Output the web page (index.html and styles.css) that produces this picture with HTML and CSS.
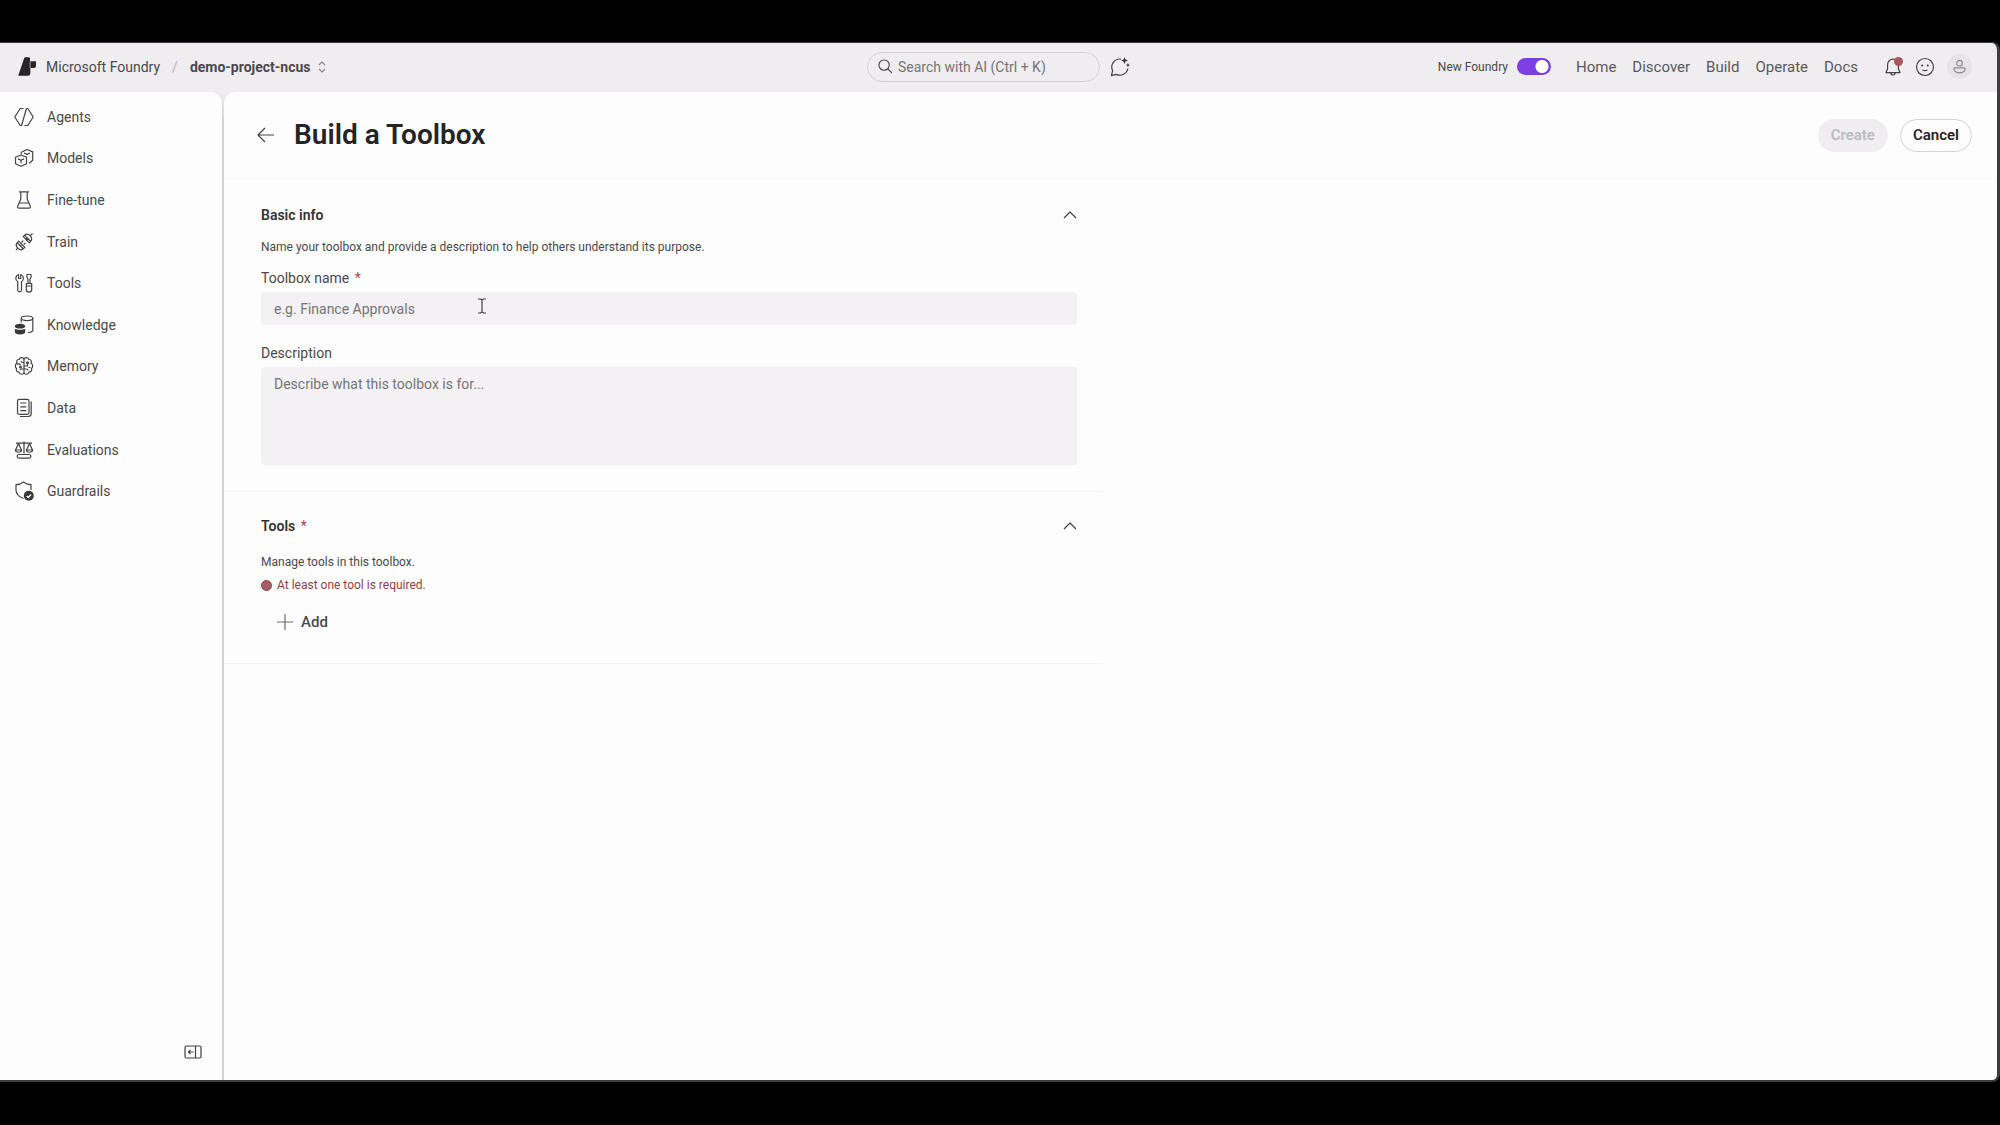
FILE: index.html
```html
<!DOCTYPE html>
<html lang="en">
<head>
<meta charset="utf-8">
<title>Build a Toolbox - Microsoft Foundry</title>
<meta name="viewport" content="width=device-width, initial-scale=1">
<link rel="stylesheet" href="styles.css">
</head>
<body>
<div class="window">
  <header class="topbar">
    <div class="crumbs">
      <a class="brand" href="#">
        <svg class="logo" viewBox="0 0 18 19" aria-hidden="true"><path d="M6.200 1 Q6.600 .3 7.500 .3 H10.800 Q12 .5 12 1.800 V4.400 L13.200 4.200 H18 V9 Q18 10.900 16.200 11 H12.400 V16.500 Q12.300 18.700 10 18.700 H.2 Z"/><path class="logo-cut" d="M12.100 4.500V11"/></svg>
        <span>Microsoft Foundry</span>
      </a>
      <span class="slash">/</span>
      <button class="project" type="button">
        <span>demo-project-ncus</span>
        <svg class="updown" viewBox="0 0 8 12" aria-hidden="true"><path d="M1 4 4 1l3 3M1 8l3 3 3-3"/></svg>
      </button>
    </div>
    <div class="search-area">
      <label class="search">
        <svg class="icon-search" viewBox="0 0 16 16" aria-hidden="true"><circle cx="6.500" cy="6.500" r="5.500"/><path d="m10.500 10.500 4.500 4.500"/></svg>
        <input type="text" aria-label="Search with AI" placeholder="Search with AI (Ctrl + K)">
      </label>
      <button class="icon-button" type="button" aria-label="Open chat">
        <svg class="icon-chat" viewBox="0 0 20 20" aria-hidden="true"><path d="M11 2.100A8.200 8.200 0 0 0 2.600 13.800L1.400 18.600l4.900-1.200A8.200 8.200 0 0 0 17.900 11.500"/><path class="solid" d="M14.500 0l1 2.500 2.500 1-2.500 1-1 2.500-1-2.500-2.500-1 2.500-1zM17.900 6l.7 1.500 1.400.6-1.400.6-.7 1.500-.6-1.500-1.500-.6 1.500-.6z"/></svg>
      </button>
    </div>
    <div class="right-tools">
      <label class="toggle">
        <span>New Foundry</span>
        <input type="checkbox" role="switch" checked>
      </label>
      <nav class="links" aria-label="Primary">
        <a href="#">Home</a><a href="#">Discover</a><a href="#">Build</a><a href="#">Operate</a><a href="#">Docs</a>
      </nav>
      <div class="actions">
        <button class="icon-button bell" type="button" aria-label="Notifications">
          <svg viewBox="0 0 20 20" aria-hidden="true"><path d="M10 2.200a5.400 5.400 0 0 0-5.400 5.400v4.200L3 15.600h14l-1.600-3.800V7.600A5.400 5.400 0 0 0 10 2.200zM7.800 15.800a2.200 2.200 0 0 0 4.400 0"/></svg>
          <span class="badge"></span>
        </button>
        <button class="icon-button" type="button" aria-label="Feedback">
          <svg viewBox="0 0 20 20" aria-hidden="true"><circle cx="10" cy="10" r="8.500"/><circle class="solid" cx="7.200" cy="8.400" r="1"/><circle class="solid" cx="12.800" cy="8.400" r="1"/><path d="M7.500 13q2.500 1.300 5 0"/></svg>
        </button>
        <button class="avatar" type="button" aria-label="Account">
          <svg viewBox="0 0 16 16" aria-hidden="true"><circle cx="8" cy="4.500" r="3"/><path d="M3 9.500h10c1 0 1.200 1 .8 2-.8 2.300-3 3.300-5.800 3.300s-5-1-5.800-3.300c-.4-1-.2-2 .8-2z"/></svg>
        </button>
      </div>
    </div>
  </header>

  <div class="body">
    <aside class="sidebar">
      <nav class="menu" aria-label="Project">
        <a href="#"><svg viewBox="0 0 20 20" aria-hidden="true"><path d="M9.500 1.500H6.200L.8 10l5.400 8.500h1.300L12.500 1.500h1.300L19.200 10l-5.400 8.500h-3.300"/></svg><span>Agents</span></a>
        <a href="#"><svg viewBox="0 0 20 20" aria-hidden="true"><path d="M1.500 9.300 7 7l5.500 2.300v6.400L7 18.300l-5.500-2.600zM4 10.900l3 1.300 3-1.300M7 12.200v3M7.300 4.300 13 1.500l5.700 2.400v8.300l-3.500 3M10 5l3 1.400 3-1.400"/><path d="M7.300 4.300v2"/></svg><span>Models</span></a>
        <a href="#"><svg viewBox="0 0 20 20" aria-hidden="true"><path d="M5 1.800h10M6.800 2v7L3.700 16.200a1.300 1.300 0 0 0 1.200 1.900h10.200a1.300 1.300 0 0 0 1.200-1.900L13.200 9V2M5.400 13h9.200"/></svg><span>Fine-tune</span></a>
        <a href="#"><svg viewBox="0 0 20 20" aria-hidden="true"><path d="m2 18 1.800-1.800M16.200 3.800 18.500 1.500M3 10.500l6.500 6.500M10.500 3.200l6.300 6.300M3.200 10.700c-1 1.200-1.300 3.600.6 5.500s4.300 1.600 5.500.6l1.500-1.500-6.100-6.100zM16.600 9.300c1-1.200 1.500-3.600-.4-5.500s-4.300-1.600-5.500-.6L9.200 4.700l6.100 6.100zM7.500 10.500 9.300 8.700M9.800 12.700l1.700-1.800M6 13l1.500 1.500M12 6l2 2"/></svg><span>Train</span></a>
        <a href="#"><svg viewBox="0 0 20 20" aria-hidden="true"><path d="M4.500 1.500a4 4 0 0 0-.8 7.200V17a1.900 1.900 0 0 0 3.800 0V8.700a4 4 0 0 0-.8-7.200V5.500H4.500zM13 1.500h4v3l-1 1.500v4.500h-2V6l-1-1.500zM12.300 10.500h5.400v6a2.700 2.700 0 0 1-5.400 0zM12.300 13h5.400"/></svg><span>Tools</span></a>
        <a href="#"><svg viewBox="0 0 20 20" aria-hidden="true"><ellipse cx="13" cy="3.300" rx="5.800" ry="2.300"/><path d="M7.200 3.500v4M18.800 3.500v11.800c0 1.200-2 2-4.800 2.200"/><path class="solid" d="M.8 11.200c0-1.500 2.300-2.500 5.200-2.500s5.200 1 5.200 2.500-2.300 2.300-5.200 2.300-5.200-.8-5.200-2.300zM.8 13.700c2.500 1.500 7.900 1.500 10.400 0v3.400c0 1.500-2.300 2.500-5.200 2.500S.8 18.600.8 17.100z"/></svg><span>Knowledge</span></a>
        <a href="#"><svg viewBox="0 0 20 20" aria-hidden="true"><path d="M10 3.500C9.700 1.200 6 .9 5.400 3.300 3.200 3 2 5.600 3 7.200c-2 .6-2.300 4-.5 5.200-.8 2.200.9 3.900 2.500 3.800.5 2.600 4.600 2.800 5 .3zM10 3.500c.3-2.300 4-2.600 4.600-.2 2.200-.3 3.400 2.300 2.400 3.900 2 .6 2.300 4 .5 5.200.8 2.200-.9 3.900-2.500 3.800-.5 2.600-4.600 2.800-5 .3M10 6.500H8.500A1.500 1.500 0 0 1 7 5M10 13H8a2 2 0 0 0-2 1M3 8.500c1-1 3-.8 3.500.7M10 10h3.500V8M10 13h2.500q1.500 0 1.500 1.500M16.500 11.500h-2"/><circle cx="6.500" cy="11" r=".9"/><circle cx="13.500" cy="6.800" r="1"/></svg><span>Memory</span></a>
        <a href="#"><svg viewBox="0 0 20 20" aria-hidden="true"><rect x="3.500" y="1.300" width="11.500" height="15" rx="1.800"/><path d="M6.300 5h6M6.300 8.800h6M6.300 12.600h6M17.200 3.500v12a3 3 0 0 1-3 3H6"/></svg><span>Data</span></a>
        <a href="#"><svg viewBox="0 0 20 20" aria-hidden="true"><path d="M2 3.200h16M10 1.500v12M4.500 3.500 1.500 10h6zM15.500 3.500l-3 6.500h6zM1.300 10c.3 3 6.100 3 6.400 0M12.300 10c.3 3 6.100 3 6.400 0M5 14.500h10a1.700 1.700 0 0 1 0 3.700H5a1.700 1.700 0 0 1 0-3.700z"/></svg><span>Evaluations</span></a>
        <a href="#"><svg viewBox="0 0 20 20" aria-hidden="true"><path d="M9.500 17.500C4.500 15.500 2 12.500 2 9V3.700C4.500 3.700 7 3 9.500 1 12 3 14.500 3.700 17 3.700V9"/><circle class="solid" cx="14.800" cy="14.800" r="5"/><path class="tick" d="m12.700 15 1.500 1.500 2.900-3"/></svg><span>Guardrails</span></a>
      </nav>
      <button class="icon-button collapse" type="button" aria-label="Collapse navigation">
        <svg viewBox="0 0 18 14" aria-hidden="true"><rect x="1" y="1" width="16" height="12" rx="1.500"/><path d="M11.500 1v12M9.500 7H4.500M6.500 5l-2 2 2 2"/></svg>
      </button>
    </aside>

    <main class="content">
      <div class="page-head">
        <button class="icon-button back" type="button" aria-label="Back">
          <svg viewBox="0 0 18 16" aria-hidden="true"><path d="M17 8H1M8 1 1 8l7 7"/></svg>
        </button>
        <h1>Build a Toolbox</h1>
        <button class="pill" type="button" disabled>Create</button>
        <button class="pill outline" type="button">Cancel</button>
      </div>
      <form class="form">
        <section class="section">
          <div class="section-head">
            <h2>Basic info</h2>
            <button class="icon-button" type="button" aria-label="Collapse Basic info"><svg class="chevron" viewBox="0 0 14 8" aria-hidden="true"><path d="m1 7 6-6 6 6"/></svg></button>
          </div>
          <p class="hint">Name your toolbox and provide a description to help others understand its purpose.</p>
          <div class="field">
            <label for="name">Toolbox name <span class="required">*</span></label>
            <div class="name-box">
              <input id="name" type="text" placeholder="e.g. Finance Approvals">
              <svg class="cursor" viewBox="0 0 10 16" aria-hidden="true"><path d="M1 1h2.500L5 2l1.500-1H9M5 2v12M1 15h2.500L5 14l1.500 1H9"/></svg>
            </div>
          </div>
          <div class="field">
            <label for="description">Description</label>
            <textarea id="description" placeholder="Describe what this toolbox is for..."></textarea>
          </div>
        </section>
        <section class="section tools">
          <div class="section-head">
            <h2>Tools <span class="required">*</span></h2>
            <button class="icon-button" type="button" aria-label="Collapse Tools"><svg class="chevron" viewBox="0 0 14 8" aria-hidden="true"><path d="m1 7 6-6 6 6"/></svg></button>
          </div>
          <p class="hint">Manage tools in this toolbox.</p>
          <p class="hint error"><span class="dot"></span>At least one tool is required.</p>
          <button class="add" type="button">
            <svg viewBox="0 0 16 16" aria-hidden="true"><path d="M8 0v16M0 8h16"/></svg>
            <span>Add</span>
          </button>
        </section>
      </form>
    </main>
  </div>
</div>
</body>
</html>
```

FILE: styles.css
```css
* {
  box-sizing: border-box;
}

body {
  margin: 0;
  min-height: 100vh;
  padding: 42px 0 43px;
  display: flex;
  background: #000;
  color: #4a494c;
  font: 14px/20px Roboto, "Liberation Sans", sans-serif;
}

h1,
h2,
p {
  margin: 0;
}

a {
  color: inherit;
  text-decoration: none;
}

button,
input,
textarea {
  font: inherit;
  color: inherit;
  border: 0;
  padding: 0;
  background: none;
}

input::placeholder,
textarea::placeholder {
  color: #757575;
  opacity: 1;
}

svg {
  display: block;
  flex: none;
  fill: none;
  stroke: #424242;
  stroke-width: 1.2;
  stroke-linejoin: round;
  overflow: visible;
}

svg .solid {
  fill: #38373a;
  stroke: none;
}

.window {
  flex: 1;
  display: flex;
  flex-direction: column;
  min-width: 0;
  background: #efedf0;
  border: solid #3c3c3e;
  border-width: 1px 3px 2px 0;
  border-radius: 0 8px 8px 0;
  overflow: hidden;
}

/* Top bar */

.topbar {
  display: grid;
  grid-template-columns: 1fr auto 1fr;
  align-items: center;
  height: 49px;
  padding: 0 18px 2px;
}

.crumbs,
.brand,
.project,
.search-area,
.search,
.right-tools,
.toggle,
.links,
.actions {
  display: flex;
  align-items: center;
}

.brand {
  gap: 10px;
}

.logo {
  width: 18px;
  height: 19px;
  fill: #262528;
  stroke: none;
}

.logo .logo-cut {
  stroke: #8a898c;
}

.slash {
  margin: 0 12px;
  color: #b4b2b6;
}

.project {
  gap: 8px;
  font-weight: 700;
}

.updown {
  width: 8px;
  height: 12px;
  stroke: #8a898c;
}

.search-area {
  gap: 10px;
}

.search {
  width: 233px;
  height: 30px;
  padding: 0 10px;
  gap: 5px;
  border: 1px solid #d3d1d5;
  border-radius: 15px;
}

.search input {
  flex: 1;
  min-width: 0;
}

.icon-search {
  width: 15px;
  height: 15px;
}

.icon-button {
  position: relative;
  flex: none;
}

.icon-button svg {
  width: 20px;
  height: 20px;
}

.right-tools {
  justify-content: flex-end;
  gap: 25px;
  padding-right: 7px;
}

.toggle {
  gap: 9px;
  font-size: 12px;
}

.toggle input {
  appearance: none;
  width: 34px;
  height: 17px;
  margin: 0;
  border-radius: 9px;
  background: radial-gradient(circle at 25px 50%, #fff 6px, #7c3fe4 7px);
}

.links {
  gap: 16px;
  color: #5a595c;
  font-size: 15px;
}

.actions {
  gap: 12px;
}

.badge {
  position: absolute;
  top: 0;
  right: 0;
  width: 9px;
  height: 9px;
  border-radius: 50%;
  background: #a85560;
}

.avatar {
  display: grid;
  place-items: center;
  width: 25px;
  height: 25px;
  border-radius: 50%;
  background: #e5e3e6;
}

.avatar svg {
  width: 15px;
  height: 15px;
  stroke: #8a898c;
}

/* Panels */

.body {
  flex: 1;
  display: flex;
  gap: 2px;
  background: linear-gradient(#efedf0, #d2d1d4 30px);
}

.sidebar,
.content {
  background: #fefdfe;
}

.sidebar {
  width: 222px;
  flex: none;
  display: flex;
  flex-direction: column;
  justify-content: space-between;
  padding: 4px 20px 21px 14px;
  border-radius: 0 12px 0 0;
}

.menu {
  display: grid;
  grid-auto-rows: 1fr;
  height: 416px;
}

.menu a {
  display: flex;
  align-items: center;
  gap: 13px;
}

.menu svg {
  width: 20px;
  height: 20px;
}

.menu .tick {
  stroke: #fff;
}

.collapse {
  align-self: flex-end;
}

.collapse svg {
  width: 18px;
  height: 14px;
}

.content {
  flex: 1;
  min-width: 0;
  border-radius: 12px 0 0 0;
}

.page-head {
  display: flex;
  align-items: center;
  gap: 12px;
  height: 87px;
  padding: 0 25px 0 33px;
  border-bottom: 1px solid #f8f7f9;
}

.page-head .back svg {
  width: 18px;
  height: 16px;
}

.page-head h1 {
  flex: 1;
  padding-left: 7px;
  color: #242326;
  font-size: 28px;
  line-height: 36px;
  font-weight: 600;
}

.pill {
  height: 33px;
  padding: 0 13px;
  border-radius: 17px;
  background: #efedf0;
  color: #bdbbbf;
  font-size: 15px;
  font-weight: 600;
}

.pill.outline {
  padding: 0 12px;
  border: 1px solid #d3d1d5;
  background: #fefdfe;
  color: #242326;
}

/* Form */

.form {
  max-width: 879px;
}

.section {
  padding: 26px 26px 26px 37px;
  border-bottom: 1px solid #f6f5f7;
}

.section-head {
  display: flex;
  align-items: center;
  justify-content: space-between;
  height: 20px;
}

.section-head h2 {
  color: #333235;
  font-size: 14px;
  line-height: 20px;
  font-weight: 600;
}

.section-head .chevron {
  width: 14px;
  height: 8px;
}

.required {
  color: #b0404e;
  font-weight: 400;
  padding-left: 2px;
}

.hint {
  margin-top: 14px;
  font-size: 12px;
  line-height: 16px;
}

.field {
  display: flex;
  flex-direction: column;
  gap: 4px;
  margin-top: 13px;
}

.field + .field {
  margin-top: 18px;
}

.name-box {
  position: relative;
}

.field input,
.field textarea {
  display: block;
  width: 100%;
  border-radius: 4px;
  background: #f3f1f4;
}

.field input {
  height: 33px;
  padding: 0 13px;
}

.field textarea {
  height: 98px;
  padding: 7px 13px;
  resize: none;
}

.cursor {
  position: absolute;
  left: 216px;
  top: 6px;
  width: 10px;
  height: 16px;
}

.tools {
  padding-top: 24px;
  padding-bottom: 25px;
}

.tools .hint {
  margin-top: 18px;
}

.tools .error {
  display: flex;
  align-items: center;
  gap: 5px;
  margin-top: 7px;
  color: #963c48;
}

.dot {
  width: 11px;
  height: 11px;
  border-radius: 50%;
  border: 1px solid #963c48;
  background: #a06068;
}

.add {
  display: flex;
  align-items: center;
  gap: 8px;
  height: 32px;
  margin: 13px 0 0 16px;
  font-size: 15px;
  font-weight: 500;
}

.add svg {
  width: 16px;
  height: 16px;
  stroke: #6a696c;
}
```
